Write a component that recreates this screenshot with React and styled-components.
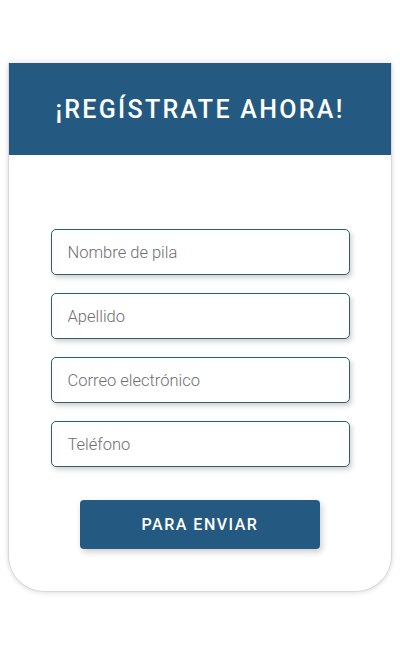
import styled, { createGlobalStyle } from "styled-components";

const GlobalStyle = createGlobalStyle`
  body {
    margin: 0;
    background: #ffffff;
    font-family: Roboto, "Liberation Sans", sans-serif;
  }
`;

const fields = ["Nombre de pila", "Apellido", "Correo electrónico", "Teléfono"];

export default function App() {
  return (
    <>
      <GlobalStyle />
      <Page>
        <Card>
          <Header>
            <Title>¡REGÍSTRATE AHORA!</Title>
          </Header>
          <Form onSubmit={(e) => e.preventDefault()}>
            <Fields>
              {fields.map((f) => (
                <Input key={f} type="text" placeholder={f} />
              ))}
            </Fields>
            <SubmitButton type="submit">PARA ENVIAR</SubmitButton>
          </Form>
        </Card>
      </Page>
    </>
  );
}

const Page = styled.div`
  padding: 63px 8px 60px;
`;

const Card = styled.div`
  background: #fff;
  border: 1px solid #d8d8d8;
  border-top: none;
  border-radius: 0 0 36px 36px;
  box-shadow: 0 -2px 6px rgba(0, 0, 0, 0.08), 0 2px 4px rgba(0, 0, 0, 0.08);
  overflow: hidden;
`;

const Header = styled.div`
  height: 92px;
  background: #245a82;
  display: flex;
  align-items: center;
  justify-content: center;
  margin: 0 -1px;
`;

const Title = styled.h1`
  margin: 0;
  color: #fff;
  font-family: Roboto, "Liberation Sans", sans-serif;
  font-weight: 500;
  font-size: 25px;
  letter-spacing: 2.3px;
`;

const Form = styled.form`
  display: flex;
  flex-direction: column;
  align-items: center;
  padding: 74px 0 42px;
`;

const Fields = styled.div`
  display: flex;
  flex-direction: column;
  gap: 18px;
  width: 299px;
`;

const Input = styled.input`
  box-sizing: border-box;
  height: 46px;
  width: 100%;
  padding: 0 16px;
  border: 1.5px solid #2f5d72;
  border-radius: 5px;
  background: #fff;
  font-family: Roboto, "Liberation Sans", sans-serif;
  font-weight: 300;
  font-size: 16.5px;
  color: #333;
  box-shadow: 2px 3px 5px rgba(0, 0, 0, 0.18);
  outline: none;

  &::placeholder {
    color: #6f6f6f;
  }
`;

const SubmitButton = styled.button`
  margin-top: 33px;
  width: 240px;
  height: 49px;
  border: none;
  border-radius: 4px;
  background: #245a82;
  color: #fff;
  font-family: Roboto, "Liberation Sans", sans-serif;
  font-weight: 500;
  font-size: 16px;
  letter-spacing: 1.5px;
  box-shadow: 2px 3px 6px rgba(0, 0, 0, 0.2);
  cursor: pointer;
`;
